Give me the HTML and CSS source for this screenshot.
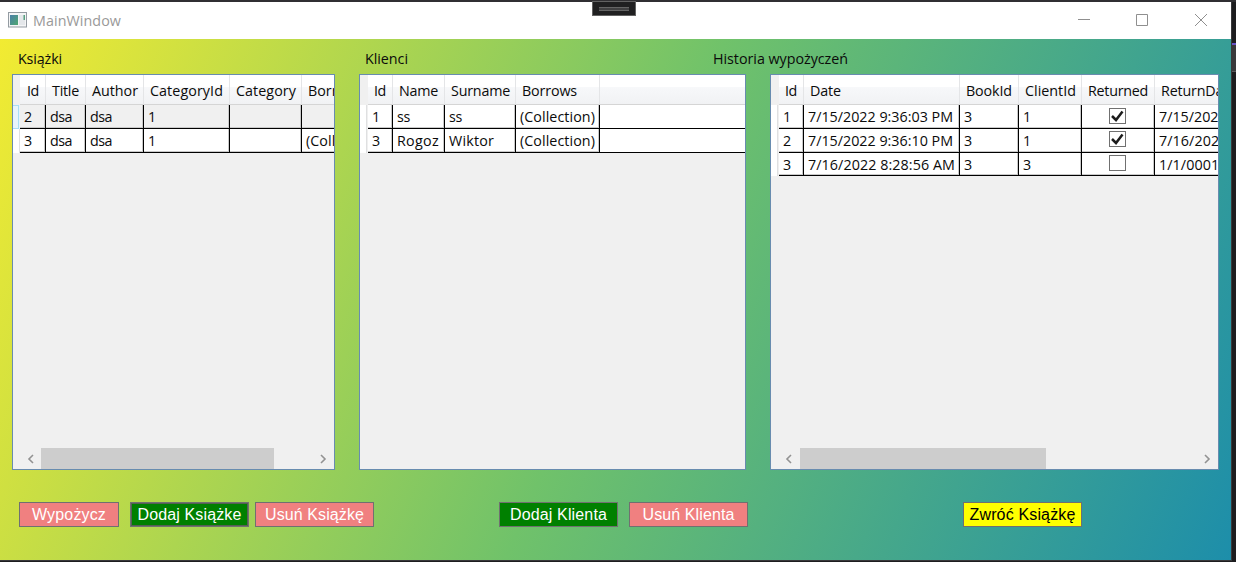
FILE: index.html
```
<!DOCTYPE html>
<html lang="pl">
<head>
<meta charset="utf-8">
<title>MainWindow</title>
<link rel="stylesheet" href="styles.css">
</head>
<body>
<div class="window">
  <header class="titlebar">
    <svg class="appicon" width="19" height="16" viewBox="0 0 19 16"><defs><linearGradient id="g" x1="0" y1="0" x2="1" y2="1"><stop offset="0" stop-color="#4a7fa8"/><stop offset="1" stop-color="#4fa870"/></linearGradient></defs><rect x=".5" y=".5" width="18" height="14.500" fill="#f4f5f6" stroke="#949ba2"/><rect x="2" y="3" width="8" height="10" fill="url(#g)"/><rect x="11" y="3" width="6" height="10" fill="#e4e7ea"/><rect x="15.500" y="3" width="1.500" height="5" fill="#57a080"/></svg>
    <span class="title"><span class="t" data-w="88">MainWindow</span></span>
    <svg class="controls" width="132" height="14" viewBox="0 0 132 14" fill="none" stroke="#8f8f8f"><path d="M0 5.500h12M58.500 .5h11v11h-11zM117 0l12 12M129 0l-12 12"/></svg>
  </header>
  <main class="content">
    <section class="col books">
      <h2><span class="t" data-w="44">Książki</span></h2>
      <div class="grid" data-grid="books"></div>
      <div class="actions">
        <button class="pink narrow"><span class="t" data-w="74">Wypożycz</span></button>
        <button class="green"><span class="t" data-w="104">Dodaj Książke</span></button>
        <button class="pink"><span class="t" data-w="99">Usuń Książkę</span></button>
      </div>
    </section>
    <section class="col clients">
      <h2><span class="t" data-w="43">Klienci</span></h2>
      <div class="grid" data-grid="clients"></div>
      <div class="actions">
        <button class="green"><span class="t" data-w="97">Dodaj Klienta</span></button>
        <button class="pink"><span class="t" data-w="92">Usuń Klienta</span></button>
      </div>
    </section>
    <section class="col history">
      <h2><span class="t" data-w="135">Historia wypożyczeń</span></h2>
      <div class="grid" data-grid="history"></div>
      <div class="actions"><button class="yellow"><span class="t" data-w="106">Zwróć Książkę</span></button></div>
    </section>
  </main>
  <div class="handle"><i></i></div>
</div>
<aside class="edge"></aside>
<script src="app.js"></script>
</body>
</html>
```
FILE: styles.css
```
* { box-sizing: border-box; }
body { margin: 0; width: 1236px; height: 562px; overflow: hidden; background: #1d1d1f; display: flex; padding-top: 2px; box-shadow: inset 0 2px #302f32; font: 14.3px/20px "Open Sans", "Noto Sans", sans-serif; color: #0b0b0b; }
.window { position: relative; width: 1232px; height: 559px; border-right: 1px solid #38383a; border-bottom: 1px solid #38383a; }
.titlebar { height: 37px; background: #fff; display: flex; align-items: center; padding: 0 21px 0 8px; color: #999; }
.appicon { margin-top: -1px; }
.title { margin-left: 6px; flex: 1; }
.controls { display: block; }
.content { height: 521px; display: flex; background: linear-gradient(112.900deg, #f2eb32 0%, #70c26a 50%, #1d8eaa 100%); }
.col { display: flex; flex-direction: column; flex: none; padding-top: 10px; }
.books { width: 359px; padding-left: 12px; }
.clients { width: 354px; }
.history { width: 518px; }
h2 { margin: 0 0 5px 6px; font-size: inherit; font-weight: 400; line-height: 20px; height: 20px; }
.history h2 { margin-left: 0; }
.t { white-space: pre; }
.grid { position: relative; height: 396px; border: 1px solid #688caf; background: #f0f0f0; overflow: hidden; flex: none; }
.books .grid { width: 323px; }
.clients .grid { width: 387px; }
.history .grid { width: 449px; margin-left: 57px; }
.row { display: flex; height: 24px; padding-left: 7px; width: max-content; min-width: 100%; background: linear-gradient(90deg, #fff 0 6px, #dfe0e1 6px 7px, transparent 7px); }
.clients .row, .history .row { padding-left: 8px; }
.row.short { height: 23px; }
.cell, .rest { flex: none; overflow: hidden; border-right: 1px solid #000; border-bottom: 1px solid #000; background: #fff; padding-left: 4px; line-height: 23px; white-space: nowrap; box-shadow: inset -1px -1px #c9c9c9; }
.rest { flex: 1; border-right: 0; box-shadow: none; }
.selected .cell { background: #f0f0f0; }
.row.selected { background: linear-gradient(#a8def5, #a8def5) 0 0/6px 1px no-repeat, linear-gradient(#a8def5, #a8def5) 0 100%/6px 1px no-repeat, linear-gradient(#a8def5, #a8def5) 5px 0/1px 100% no-repeat, #e8f4fb; }
.row.head { height: 30px; background: #f0f0f0; }
.head .cell, .head .rest { line-height: 32px; padding-left: 6px; background: linear-gradient(#fff 0 12px, #f7f8fa 12px, #f1f2f4 100%); border-color: #e4e5e7; border-bottom-color: #d5d5d5; box-shadow: none; }
.books .head .cell:first-child { padding-left: 7px; }
.check { padding: 3px 0 0 27px; }
.check svg { display: block; }
.row + .row + .row .check { padding-top: 2px; }
.scroll { position: absolute; left: 7px; right: 0; bottom: 0; height: 21px; display: flex; align-items: center; padding: 0 7px; }
.thumb { height: 21px; background: #cdcdcd; margin-left: 6px; }
.history .thumb { margin-left: 7px; }
.scroll svg:last-child { margin-left: auto; }
.actions { display: flex; margin-top: 32px; padding-left: 7px; }
button { flex: none; width: 119px; height: 25px; padding: 0; border: 1px solid #707070; color: #fff; font: 16px/21px "Liberation Sans", sans-serif; white-space: nowrap; text-align: center; }
.narrow { width: 100px; margin-right: 11px; }
.pink { background: #f08080; }
.green { background: #008000; }
.books .green { margin-right: 6px; box-shadow: inset 0 0 0 1px #555f55; }
.yellow { background: #ff0; color: #000; }
.clients .actions { padding-left: 140px; gap: 11px; }
.history .actions { padding-left: 250px; }
.handle { position: absolute; left: 592px; top: -1px; width: 44px; height: 15px; border: 1px solid #626262; background: #202021; padding: 5px 6px; }
.handle i { display: block; height: 4px; border: solid #656565; border-width: 1px 0; background: #414142; }
.edge { width: 4px; height: 560px; background: linear-gradient(#1d1d1f 0 41px, #6553c7 41px 43px, #39393b 43px 69px, #59595b 69px 70px, #1d1d1f 70px); }
```
FILE: app.js
```
const tables = {
  books: {
    cols: [['Id', 12, 26], ['Title', 27, 40], ['Author', 46, 58], ['CategoryId', 73, 86], ['Category', 60, 72], ['Borrows', 56, 90]],
    rows: [[['2', 8], ['dsa', 22], ['dsa', 22], ['1', 8], null, null], [['3', 8], ['dsa', 22], ['dsa', 22], ['1', 8], null, ['(Collection)', 75]]],
    selected: 0, thumb: 233
  },
  clients: {
    cols: [['Id', 12, 25], ['Name', 39, 52], ['Surname', 59, 71], ['Borrows', 55, 84]],
    rows: [[['1', 8], ['ss', 13], ['ss', 13], ['(Collection)', 75]], [['3', 8], ['Rogoz', 42], ['Wiktor', 45], ['(Collection)', 75]]],
    rest: true
  },
  history: {
    cols: [['Id', 12, 25], ['Date', 31, 156], ['BookId', 46, 59], ['ClientId', 51, 63], ['Returned', 60, 73], ['ReturnDate', 75, 158]],
    rows: [
      [['1', 8], ['7/15/2022 9:36:03 PM', 145], ['3', 8], ['1', 8], true, ['7/15/2022 9:36:33 PM', 145]],
      [['2', 8], ['7/15/2022 9:36:10 PM', 145], ['3', 8], ['1', 8], true, ['7/16/2022 8:28:33 AM', 147]],
      [['3', 8], ['7/16/2022 8:28:56 AM', 147], ['3', 8], ['3', 8], false, ['1/1/0001 12:00:00 AM', 147]]
    ],
    thumb: 246
  }
};
const text = (s, w) => `<span class="t" data-w="${w}">${s}</span>`;
const check = on => `<svg width="17" height="17" viewBox="0 0 17 17" fill="none"><rect x=".5" y=".5" width="16" height="15" fill="#fff" stroke="#707070"/>${on ? '<path d="M3 8l4 4 6.500-8.500" stroke="#1c1c1c" stroke-width="2.500"/>' : ''}</svg>`;
const arrow = d => `<svg width="8" height="10" viewBox="0 0 8 10" fill="none" stroke="#929292" stroke-width="1.600"><path d="${d}"/></svg>`;
for (const [name, t] of Object.entries(tables)) {
  const rest = t.rest ? '<div class="rest"></div>' : '';
  let html = '<div class="row head">' + t.cols.map(c => `<div class="cell" style="width:${c[2]}px">${text(c[0], c[1])}</div>`).join('') + rest + '</div>';
  t.rows.forEach((r, i) => {
    html += `<div class="row${i === 2 ? ' short' : ''}${t.selected === i ? ' selected' : ''}">` + r.map((c, k) => {
      const box = typeof c === 'boolean';
      return `<div class="cell${box ? ' check' : ''}" style="width:${t.cols[k][2]}px">${box ? check(c) : c ? text(...c) : ''}</div>`;
    }).join('') + rest + '</div>';
  });
  if (t.thumb) html += `<div class="scroll">${arrow('M6 1L2 5l4 4')}<div class="thumb" style="width:${t.thumb}px"></div>${arrow('M2 1l4 4-4 4')}</div>`;
  document.querySelector(`[data-grid=${name}]`).innerHTML = html;
}
document.querySelectorAll('.t').forEach(e => {
  const n = e.textContent.length;
  if (n > 1) e.style.letterSpacing = (e.dataset.w - e.getBoundingClientRect().width) / n + 'px';
});
```
